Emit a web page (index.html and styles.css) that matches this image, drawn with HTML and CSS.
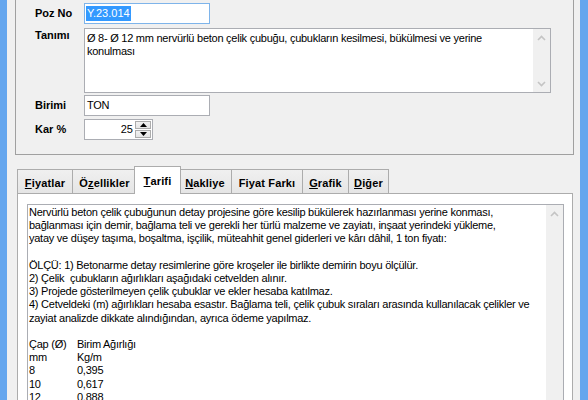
FILE: index.html
```html
<!DOCTYPE html>
<html lang="tr">
<head>
<meta charset="utf-8">
<title>Poz</title>
<link rel="stylesheet" href="styles.css">
</head>
<body>
<div class="window">
  <div class="frame"></div>
  <div class="client">
    <div class="group">
      <div class="row row-first">
        <span class="lbl">Poz No</span>
        <div class="input focus"><span class="sel">Y.23.014</span></div>
      </div>
      <div class="row row-desc">
        <span class="lbl lbl-top">Tanımı</span>
        <div class="textarea">
          <div class="ta-text">Ø 8- Ø 12 mm nervürlü beton çelik çubuğu, çubukların kesilmesi, bükülmesi ve yerine<br>konulması</div>
          <div class="vscroll">
            <span class="arrow"><svg width="9" height="6" viewBox="0 0 9 6"><path d="M1 5 L4.5 1.5 L8 5" fill="none" stroke="#c4c4c4" stroke-width="1.6"/></svg></span>
            <span class="arrow"><svg width="9" height="6" viewBox="0 0 9 6"><path d="M1 1 L4.5 4.5 L8 1" fill="none" stroke="#c4c4c4" stroke-width="1.6"/></svg></span>
          </div>
        </div>
      </div>
      <div class="row row-unit">
        <span class="lbl">Birimi</span>
        <div class="input">TON</div>
      </div>
      <div class="row row-kar">
        <span class="lbl">Kar %</span>
        <div class="spin">
          <span class="spin-val">25</span>
          <div class="spin-btns">
            <span class="spin-btn"><svg width="7" height="4" viewBox="0 0 7 4"><path d="M0 4 L3.5 0 L7 4 Z" fill="#000"/></svg></span>
            <span class="spin-btn"><svg width="7" height="4" viewBox="0 0 7 4"><path d="M0 0 L3.5 4 L7 0 Z" fill="#000"/></svg></span>
          </div>
        </div>
      </div>
    </div>

    <div class="tabs">
      <div class="tabstrip">
        <span class="tab tab-fiyatlar"><u>F</u>iyatlar</span>
        <span class="tab tab-ozellik">Ö<u>z</u>ellikler</span>
        <span class="tab active tab-tarifi"><u>T</u>arifi</span>
        <span class="tab tab-nakliye"><u>N</u>akliye</span>
        <span class="tab tab-fark">Fiyat Farkı</span>
        <span class="tab tab-grafik"><u>G</u>rafik</span>
        <span class="tab tab-diger"><u>D</u>iğer</span>
      </div>
      <div class="panel">
        <div class="memo">
          <div class="memo-text">
            <div>Nervürlü beton çelik çubuğunun detay projesine göre kesilip bükülerek hazırlanması yerine konması,</div>
            <div>bağlanması için demir, bağlama teli ve gerekli her türlü malzeme ve zayiatı, inşaat yerindeki yükleme,</div>
            <div>yatay ve düşey taşıma, boşaltma, işçilik, müteahhit genel giderleri ve kârı dâhil, 1 ton fiyatı:</div>
            <div class="blank"></div>
            <div>ÖLÇÜ: 1) Betonarme detay resimlerine göre kroşeler ile birlikte demirin boyu ölçülür.</div>
            <div>2) Çelik &nbsp;çubukların ağırlıkları aşağıdaki cetvelden alınır.</div>
            <div>3) Projede gösterilmeyen çelik çubuklar ve ekler hesaba katılmaz.</div>
            <div>4) Cetveldeki (m) ağırlıkları hesaba esastır. Bağlama teli, çelik çubuk sıraları arasında kullanılacak çelikler ve</div>
            <div>zayiat analizde dikkate alındığından, ayrıca ödeme yapılmaz.</div>
            <div class="blank"></div>
            <div class="cols"><span class="c1">Çap (Ø)</span><span>Birim Ağırlığı</span></div>
            <div class="cols"><span class="c1">mm</span><span>Kg/m</span></div>
            <div class="cols"><span class="c1">8</span><span>0,395</span></div>
            <div class="cols"><span class="c1">10</span><span>0,617</span></div>
            <div class="cols"><span class="c1">12</span><span>0,888</span></div>
          </div>
          <div class="vscroll vscroll-memo">
            <span class="arrow"><svg width="9" height="6" viewBox="0 0 9 6"><path d="M1 5 L4.5 1.5 L8 5" fill="none" stroke="#c4c4c4" stroke-width="1.6"/></svg></span>
          </div>
        </div>
      </div>
    </div>
  </div>
  <div class="frame frame-r"></div>
</div>
</body>
</html>
```

FILE: styles.css
```css
html, body {
  margin: 0;
  padding: 0;
  background: #f0f0f0;
}
body {
  font-family: "Liberation Sans", Arial, sans-serif;
  font-size: 11px;
  letter-spacing: -0.25px;
  color: #000;
}
.window {
  display: flex;
  width: 588px;
  height: 400px;
  overflow: hidden;
}
.frame {
  width: 7px;
  flex: none;
  background: #65a6ee;
}
.frame-r {
  width: 8px;
}
.client {
  flex: 1;
  min-width: 0;
  padding: 0 6px 0 8px;
  display: flex;
  flex-direction: column;
}

/* group box */
.group {
  flex: none;
  height: 155px;
  box-sizing: border-box;
  border: 1px solid #a0a0a0;
  border-top: none;
  padding: 3px 0 0 19px;
}
.row {
  display: flex;
  align-items: center;
}
.row-desc {
  align-items: flex-start;
  margin-top: 4px;
}
.row-unit {
  margin-top: 2px;
}
.row-kar {
  margin-top: 3px;
}
.lbl {
  width: 49px;
  flex: none;
  font-weight: bold;
  letter-spacing: 0;
  line-height: 13px;
}
.lbl-top {
  margin-top: 1px;
}
.input {
  box-sizing: border-box;
  width: 126px;
  height: 21px;
  border: 1px solid #abadb3;
  background: #fff;
  padding: 0 2px;
  display: flex;
  align-items: center;
  line-height: 13px;
}
.input.focus {
  border-color: #7eb4ea;
  padding-left: 1px;
}
.sel {
  background: #3399ff;
  color: #fff;
  padding: 1px 1px;
  letter-spacing: 0;
  line-height: 13px;
}
.textarea {
  box-sizing: border-box;
  width: 467px;
  height: 65px;
  border: 1px solid #abadb3;
  background: #fff;
  display: flex;
}
.ta-text {
  flex: 1;
  padding: 3px 2px 0 2px;
  line-height: 13.4px;
}
.vscroll {
  width: 17px;
  flex: none;
  background: #f0f0f0;
  display: flex;
  flex-direction: column;
  justify-content: space-between;
}
.arrow {
  height: 17px;
  display: flex;
  align-items: center;
  justify-content: center;
}
.spin {
  box-sizing: border-box;
  width: 69px;
  height: 21px;
  border: 1px solid #abadb3;
  background: #fff;
  display: flex;
  align-items: center;
  padding: 1px 1px 1px 2px;
}
.spin-val {
  flex: 1;
  text-align: right;
  padding-right: 2px;
  letter-spacing: 0;
  line-height: 13px;
}
.spin-btns {
  display: flex;
  flex-direction: column;
  gap: 1px;
  height: 17px;
}
.spin-btn {
  box-sizing: border-box;
  width: 16px;
  height: 8px;
  border: 1px solid #acacac;
  background: linear-gradient(#f2f2f2, #e5e5e5);
  display: flex;
  align-items: center;
  justify-content: center;
}

/* tabs */
.tabs {
  margin-top: 11px;
  flex: 1;
  display: flex;
  flex-direction: column;
  padding: 0 1px 0 2px;
  min-height: 0;
}
.tabstrip {
  height: 27px;
  flex: none;
  display: flex;
  align-items: flex-end;
}
.tab {
  position: relative;
  box-sizing: border-box;
  height: 24px;
  border: 1px solid #acacac;
  border-bottom: none;
  margin-right: -1px;
  padding: 2px 0 0 0;
  background: linear-gradient(#f0f0f0, #e5e5e5);
  font-weight: bold;
  letter-spacing: 0.15px;
  display: flex;
  align-items: center;
  justify-content: center;
  white-space: nowrap;
}
.tab u {
  text-decoration-thickness: 1px;
  text-underline-offset: 1px;
}
.tab.active {
  z-index: 1;
  height: 28px;
  margin: 0 -3px -1px -2px;
  padding: 0;
  background: #fff;
}
.tab-fiyatlar { width: 56px; }
.tab-ozellik { width: 65px; }
.tab-tarifi { width: 47px; }
.tab-nakliye { width: 54px; }
.tab-fark { width: 72px; }
.tab-grafik { width: 47px; }
.tab-diger { width: 41px; }
.panel {
  flex: 1;
  border: 1px solid #acacac;
  background: #fff;
  padding: 10px 8px 0 9px;
}
.memo {
  height: 300px;
  border: 1px solid #abadb3;
  display: flex;
}
.memo-text {
  flex: 1;
  padding: 1px 2px 0 1px;
  line-height: 13.2px;
  white-space: nowrap;
}
.blank {
  height: 13.2px;
}
.cols {
  display: flex;
}
.c1 {
  width: 48px;
}
.vscroll-memo {
  justify-content: flex-start;
}
```
